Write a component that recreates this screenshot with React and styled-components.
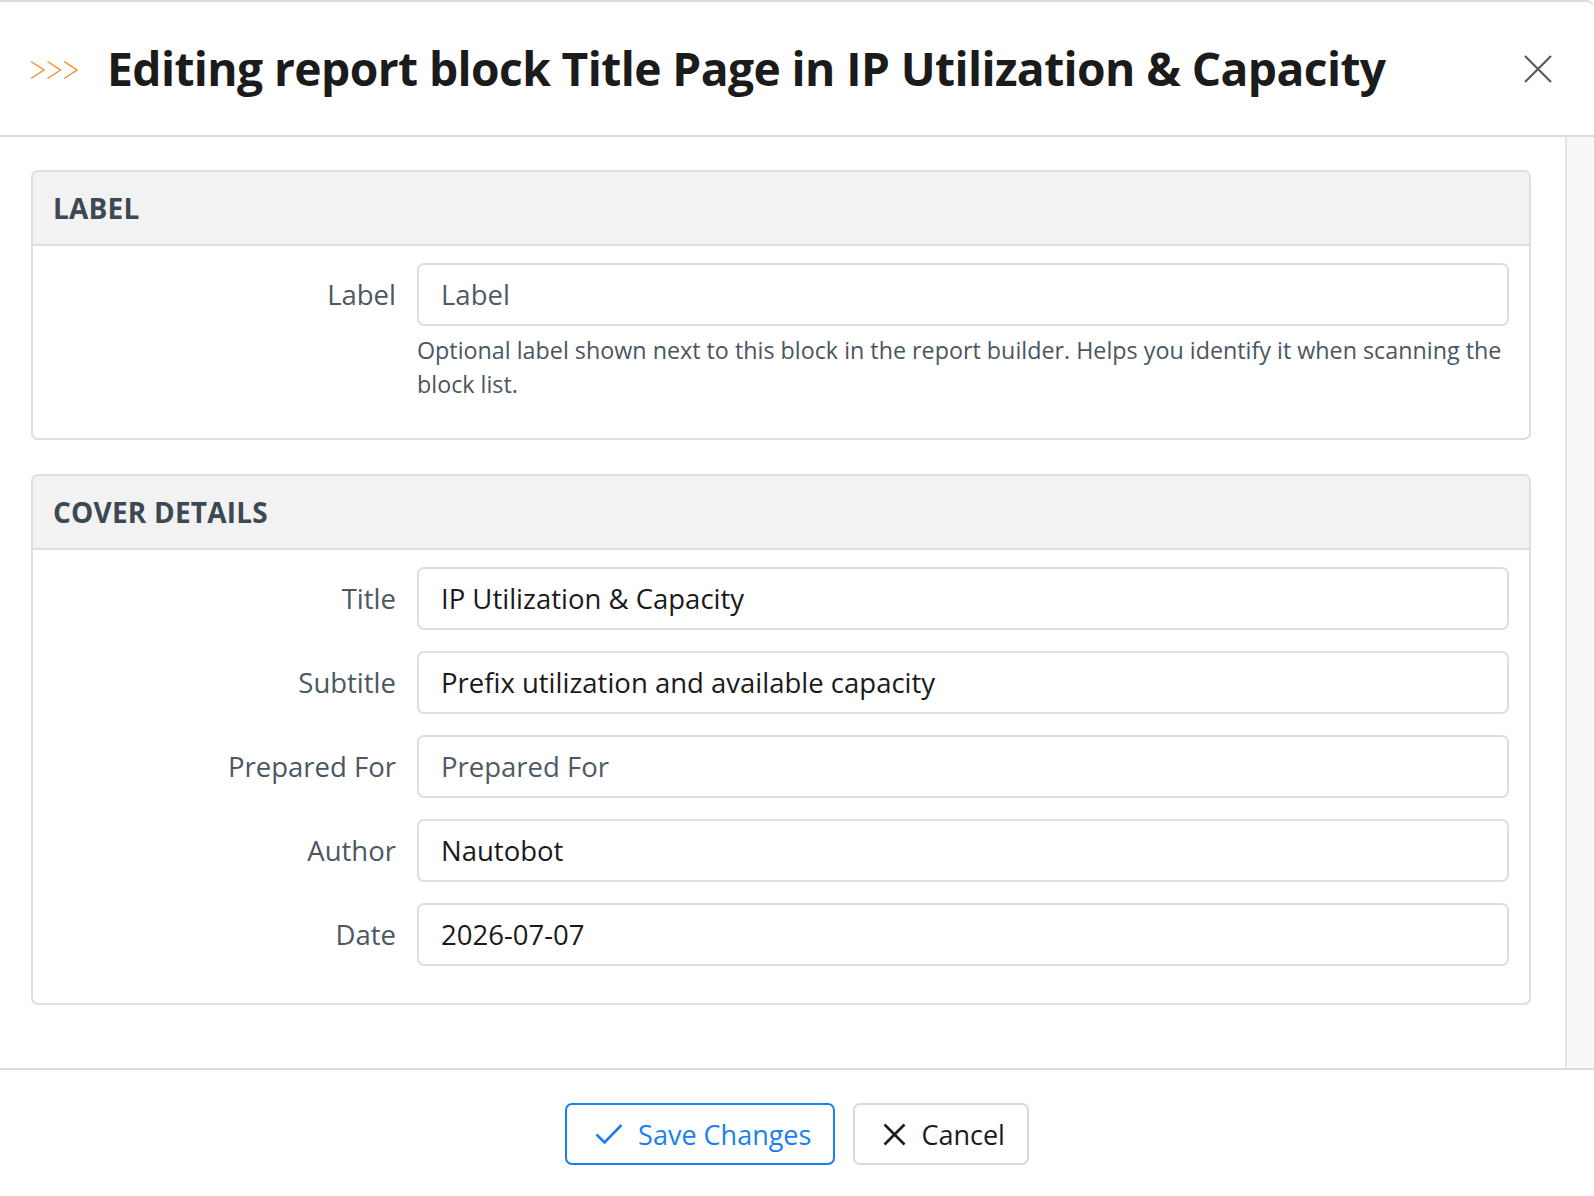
import React from "react";
import styled, { createGlobalStyle } from "styled-components";

const GlobalStyle = createGlobalStyle`
  html, body {
    margin: 0;
    padding: 0;
    background: #fff;
  }
  body {
    font-family: "Open Sans", "Noto Sans", sans-serif;
  }
  * {
    box-sizing: border-box;
  }
`;

const Modal = styled.div`
  display: flex;
  flex-direction: column;
  height: 100vh;
  border-top: 2px solid #dcdcdc;
  border-top-right-radius: 8px;
  overflow: hidden;
`;

const Header = styled.div`
  display: flex;
  align-items: center;
  flex-shrink: 0;
  height: 135px;
  padding: 0 42px 0 30px;
  border-bottom: 2px solid #dcdcdc;
`;

const Arrows = styled.svg`
  width: 48px;
  height: 20px;
  flex-shrink: 0;
  margin-right: 29px;
  margin-top: 2px;
`;

const Title = styled.h1`
  flex: 1;
  margin: 0;
  font-size: 46.2px;
  font-weight: 700;
  letter-spacing: -0.6px;
  color: #1b1b1b;
  white-space: nowrap;
`;

const CloseButton = styled.button`
  display: flex;
  align-items: center;
  justify-content: center;
  width: 28px;
  height: 28px;
  padding: 0;
  border: 0;
  background: none;
  color: #5a5a5a;
`;

const BodyRow = styled.div`
  flex: 1;
  display: flex;
  min-height: 0;
  border-bottom: 2px solid #dcdcdc;
`;

const Content = styled.div`
  flex: 1;
  overflow: hidden;
  display: flex;
  flex-direction: column;
  gap: 34px;
  padding: 33px 34px 33px 31px;
`;

const ScrollTrack = styled.div`
  width: 29px;
  flex-shrink: 0;
  background: #f8f8f8;
  border-left: 2px solid #e6e6e6;
`;

const Panel = styled.section`
  flex-shrink: 0;
  border: 2px solid #dedede;
  border-radius: 7px;
  overflow: hidden;
`;

const PanelHeader = styled.h2`
  display: flex;
  align-items: center;
  height: 74px;
  margin: 0;
  padding: 0 20px;
  background: #f2f2f2;
  border-bottom: 2px solid #dedede;
  font-size: 28px;
  font-weight: 700;
  color: #3d4852;
  letter-spacing: 0.2px;
`;

const PanelBody = styled.div`
  display: grid;
  grid-template-columns: 363px 1fr;
  column-gap: 21px;
  row-gap: 21px;
  padding: 17px 20px 37px 0;
`;

const FieldLabel = styled.label`
  display: flex;
  align-items: center;
  justify-content: flex-end;
  height: 63px;
  font-size: 27.5px;
  color: #4b5763;
`;

const Field = styled.div`
  display: flex;
  flex-direction: column;
`;

const Input = styled.input`
  width: 100%;
  height: 63px;
  padding: 0 22px;
  border: 2px solid #dedede;
  border-radius: 7px;
  font-family: inherit;
  font-size: 27.5px;
  color: #1a1a1a;
  background: #fff;
  outline: none;

  &::placeholder {
    color: #4e5a66;
  }
`;

const Help = styled.p`
  margin: 8px 0 0;
  font-size: 23.3px;
  line-height: 33.5px;
  color: #4a5661;
`;

const Footer = styled.div`
  display: flex;
  justify-content: center;
  gap: 18px;
  flex-shrink: 0;
  height: 126px;
  padding-top: 33px;
`;

const Button = styled.button`
  display: flex;
  align-items: center;
  gap: 15px;
  height: 62px;
  padding: 0 22px 0 28px;
  border: 2px solid ${p => (p.primary ? "#1a80f2" : "#d9d9d9")};
  border-radius: 7px;
  background: #fff;
  color: ${p => (p.primary ? "#1a7ff0" : "#1b1b1b")};
  font-family: inherit;
  font-size: 27px;
`;

const Icon = styled.svg`
  flex-shrink: 0;
`;

const coverFields = [
  { label: "Title", value: "IP Utilization & Capacity" },
  { label: "Subtitle", value: "Prefix utilization and available capacity" },
  { label: "Prepared For", placeholder: "Prepared For" },
  { label: "Author", value: "Nautobot" },
  { label: "Date", value: "2026-07-07" },
];

export default function App() {
  return (
    <>
      <GlobalStyle />
      <Modal>
        <Header>
          <Arrows viewBox="0 0 48 20">
            <g fill="none" stroke="#f28c28" strokeWidth="1.4">
              <polyline points="1,1.5 14,10 1,18.5" />
              <polyline points="17.5,1.5 30.5,10 17.5,18.5" />
              <polyline points="34,1.5 47,10 34,18.5" />
            </g>
          </Arrows>
          <Title>Editing report block Title Page in IP Utilization &amp; Capacity</Title>
          <CloseButton aria-label="Close">
            <svg width="28" height="28" viewBox="0 0 28 28">
              <path d="M1 1L27 27M27 1L1 27" stroke="currentColor" strokeWidth="2.2" />
            </svg>
          </CloseButton>
        </Header>

        <BodyRow>
          <Content>
            <Panel>
              <PanelHeader>LABEL</PanelHeader>
              <PanelBody>
                <FieldLabel>Label</FieldLabel>
                <Field>
                  <Input placeholder="Label" />
                  <Help>
                    Optional label shown next to this block in the report builder. Helps you identify it when
                    scanning the block list.
                  </Help>
                </Field>
              </PanelBody>
            </Panel>

            <Panel>
              <PanelHeader>COVER DETAILS</PanelHeader>
              <PanelBody>
                {coverFields.map(f => (
                  <React.Fragment key={f.label}>
                    <FieldLabel>{f.label}</FieldLabel>
                    <Input defaultValue={f.value} placeholder={f.placeholder} />
                  </React.Fragment>
                ))}
              </PanelBody>
            </Panel>
          </Content>
          <ScrollTrack />
        </BodyRow>

        <Footer>
          <Button primary>
            <Icon width="28" height="22" viewBox="0 0 28 22">
              <path d="M1.5 11.5L9.5 19.5L26.5 2" fill="none" stroke="currentColor" strokeWidth="2.6" />
            </Icon>
            Save Changes
          </Button>
          <Button>
            <Icon width="23" height="23" viewBox="0 0 23 23">
              <path d="M1.5 1.5L21.5 21.5M21.5 1.5L1.5 21.5" stroke="currentColor" strokeWidth="2.6" />
            </Icon>
            Cancel
          </Button>
        </Footer>
      </Modal>
    </>
  );
}
